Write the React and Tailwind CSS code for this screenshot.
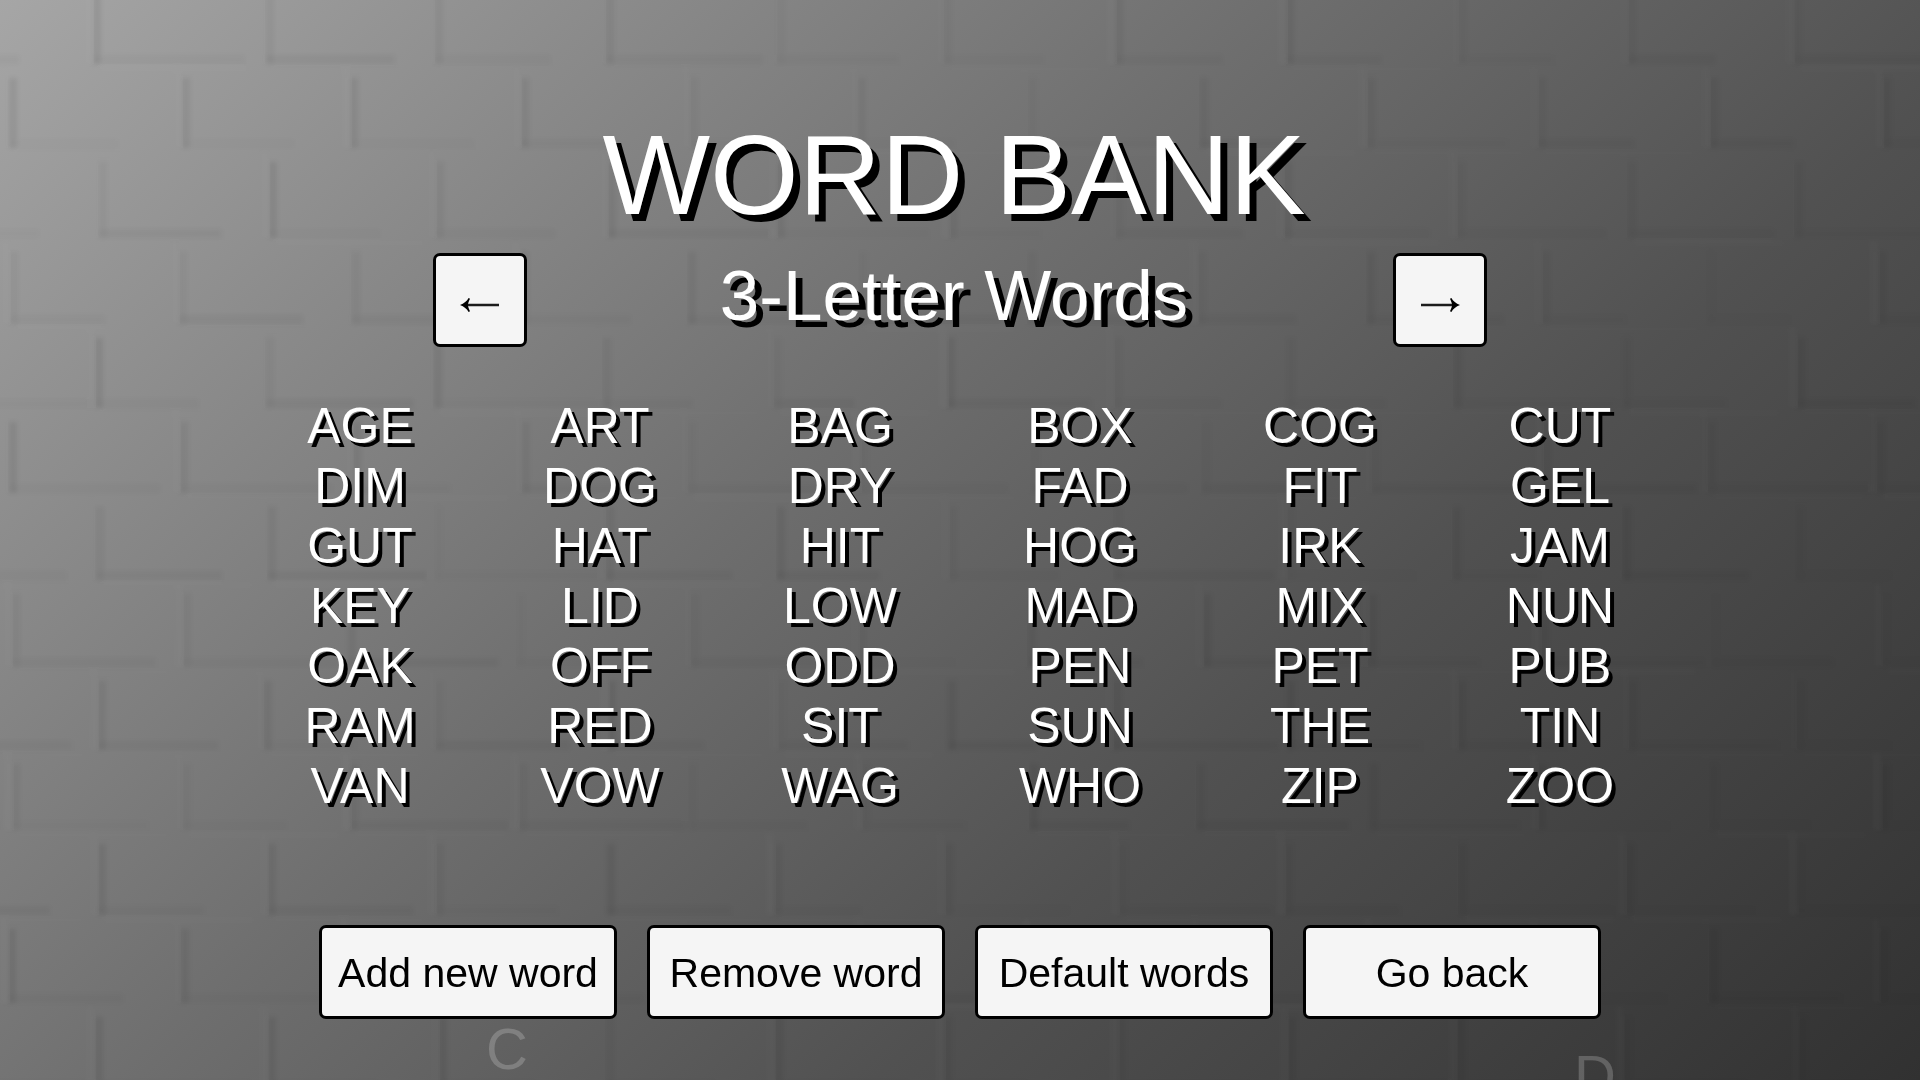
import { useState } from "react";

const DEFAULT_WORDS = [
  "AGE", "ART", "BAG", "BOX", "COG", "CUT",
  "DIM", "DOG", "DRY", "FAD", "FIT", "GEL",
  "GUT", "HAT", "HIT", "HOG", "IRK", "JAM",
  "KEY", "LID", "LOW", "MAD", "MIX", "NUN",
  "OAK", "OFF", "ODD", "PEN", "PET", "PUB",
  "RAM", "RED", "SIT", "SUN", "THE", "TIN",
  "VAN", "VOW", "WAG", "WHO", "ZIP", "ZOO",
];

export default function App() {
  const [words, setWords] = useState(DEFAULT_WORDS);

  return (
    <div className="relative min-h-screen overflow-hidden bg-[linear-gradient(137deg,#a6a6a6_0%,#8b8b8b_20%,#6e6e6e_42%,#515151_66%,#313131_100%)] font-['Liberation_Sans',Arial,sans-serif]">
      <BrickWall />
      <FloatingLetters />

      <main className="relative flex flex-col items-center pt-[115px] pb-[61px]">
        <h1 className="pr-3 text-[114px] leading-[120px] text-white [text-shadow:7px_7px_0_#000]">
          WORD BANK
        </h1>

        <div className="mt-[18px] flex w-full max-w-[1054px] items-start justify-between">
          <ArrowButton label="Previous word length" direction="left" />
          <h2 className="pr-3 text-[71px] leading-[86px] text-white [text-shadow:7px_7px_0_#000]">
            3-Letter Words
          </h2>
          <ArrowButton label="Next word length" direction="right" />
        </div>

        <ul className="mt-[49px] grid w-3/4 grid-cols-6 text-center text-[50px] leading-[60px] text-white [text-shadow:4px_4px_0_#000]">
          {words.map((word) => (
            <li key={word}>{word}</li>
          ))}
        </ul>

        <div className="mt-[109px] grid w-full max-w-[1282px] grid-cols-4 gap-[30px]">
          <MenuButton>Add new word</MenuButton>
          <MenuButton onClick={() => setWords((w) => w.slice(0, -1))}>
            Remove word
          </MenuButton>
          <MenuButton onClick={() => setWords(DEFAULT_WORDS)}>
            Default words
          </MenuButton>
          <MenuButton>Go back</MenuButton>
        </div>
      </main>
    </div>
  );
}

const buttonClass =
  "h-[94px] rounded-[7px] border-3 border-black bg-[#f5f5f5] text-black hover:bg-white";

function MenuButton({ children, onClick }) {
  return (
    <button
      type="button"
      onClick={onClick}
      className={`${buttonClass} pt-[2px] text-[41px] leading-[48px] whitespace-nowrap`}
    >
      {children}
    </button>
  );
}

function ArrowButton({ label, direction }) {
  return (
    <button
      type="button"
      aria-label={label}
      className={`${buttonClass} flex w-[94px] items-center justify-center pt-[10px]`}
    >
      <svg
        viewBox="0 0 40 16"
        className={direction === "right" ? "w-10 rotate-180" : "w-10"}
        fill="none"
        stroke="#1c1c1c"
      >
        <path d="M4 8H39" strokeWidth="2.3" />
        <path d="M0 8C4 6.500 7 4 8.600 1L10 1.800C8.800 4.200 8.200 6 7.800 8C8.200 10 8.800 11.800 10 14.200L8.600 15C7 12 4 9.500 0 8Z" fill="#000" stroke="none" />
      </svg>
    </button>
  );
}

function FloatingLetters() {
  return (
    <div aria-hidden="true" className="text-[58px] leading-[64px] text-white/20">
      <span className="absolute top-[1017px] left-[486px]">C</span>
      <span className="absolute top-[1044px] left-[1574px]">D</span>
    </div>
  );
}

// Bottom edge of each course of bricks
const COURSES = [64, 148, 238, 324, 408, 493, 580, 667, 750, 830, 915, 1003, 1090];
const BRICK_WIDTH = 170;

// Small repeatable noise so the mortar is not even
const noise = (n) => {
  const v = Math.sin(n * 12.9898) * 43758.5453;
  return v - Math.floor(v);
};

function BrickWall() {
  return (
    <svg
      aria-hidden="true"
      viewBox="0 0 1920 1080"
      preserveAspectRatio="xMidYMid slice"
      className="absolute inset-0 h-full w-full"
    >
      <defs>
        <filter id="soft" x="0" y="0" width="100%" height="100%">
          <feGaussianBlur stdDeviation="2" />
        </filter>
      </defs>
      <g filter="url(#soft)">
        {COURSES.map((bottom, row) => {
          const top = row === 0 ? -22 : COURSES[row - 1];
          const start = row % 2 === 0 ? -74 : -160;
          return Array.from({ length: 13 }, (_, col) => {
            const n = row * 17 + col + 1;
            const x = start + col * BRICK_WIDTH + Math.round(noise(n) * 6 - 3);
            // the light comes from the left, so joints fade to the right
            const fade = 1 - col * 0.03;
            const left = (0.01 + noise(n + 300) * 0.065) * fade;
            const base = (0.01 + noise(n + 600) * 0.035) * fade;
            return (
              <g key={n}>
                <rect x={x} y={top + 14} width="8" height={bottom - top - 14} fill="#000" opacity={left} />
                <rect x={x} y={bottom - 9} width={80 + noise(n + 50) * 88} height="9" fill="#000" opacity={base} />
                <rect x={x - 8} y={top + 4} width="7" height={bottom - top - 4} fill="#fff" opacity={noise(n + 900) * 0.02} />
                <rect x={x + 6} y={bottom + 2} width="150" height="6" fill="#fff" opacity={noise(n + 1200) * 0.014} />
              </g>
            );
          });
        })}
      </g>
    </svg>
  );
}
